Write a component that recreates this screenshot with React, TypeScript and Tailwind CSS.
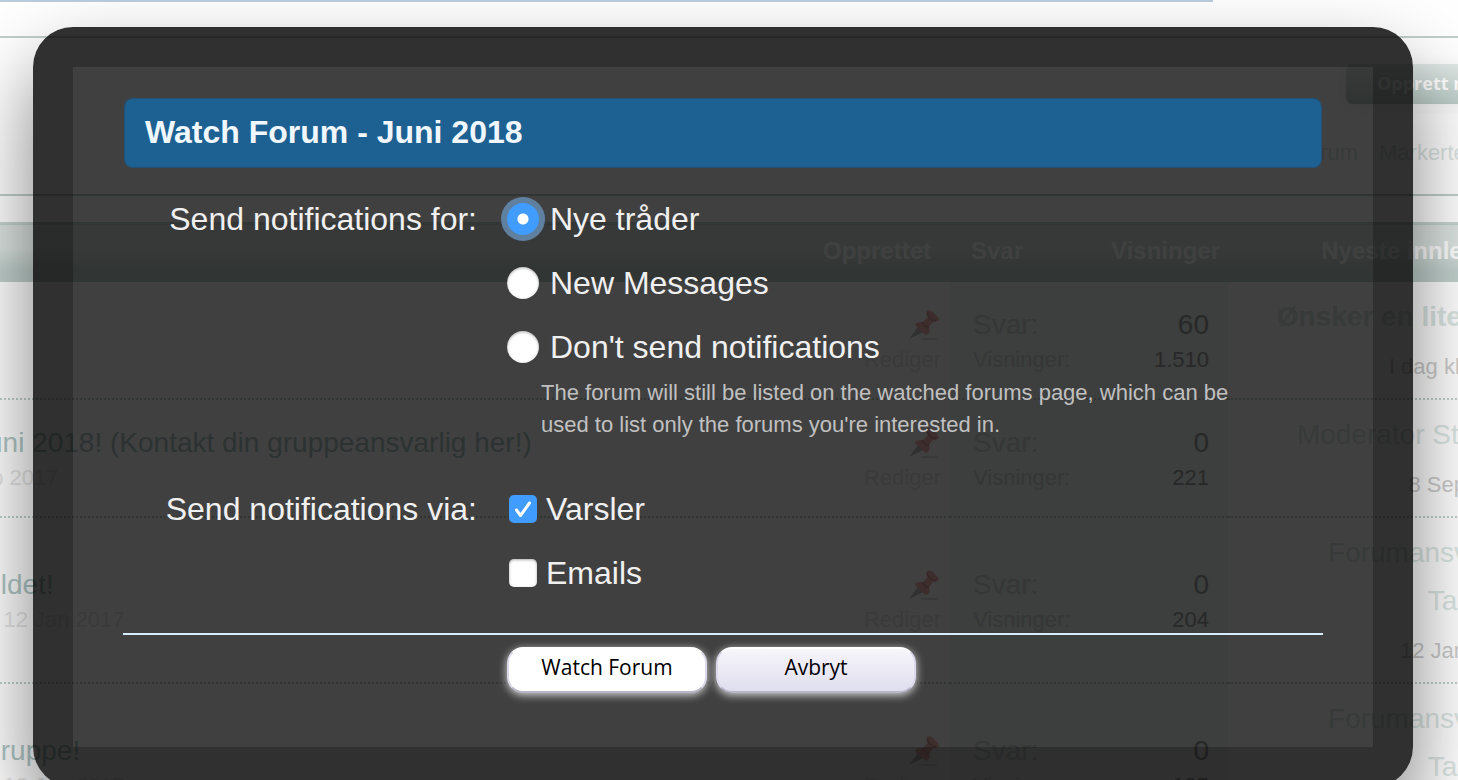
import clsx from 'clsx';
import { ReactNode, useState } from 'react';

type Thread = {
  title: string;
  titleClass: string;
  date: string;
  replies: string;
  views: string;
  last: string[];
  lastBold?: boolean;
  lastDate: string;
};

const threads: Thread[] = [
  {
    title: 'ni',
    titleClass: 'pl-0',
    date: '',
    replies: '60',
    views: '1.510',
    last: ['Ønsker en liten du'],
    lastBold: true,
    lastDate: 'I dag kl 12:34',
  },
  {
    title: 'uni 2018! (Kontakt din gruppeansvarlig her!)',
    titleClass: 'pl-2',
    date: 'ep 2017',
    replies: '0',
    views: '221',
    last: ['Moderator Steinar'],
    lastDate: '8 Sep 2017',
  },
  {
    title: 'bildet!',
    titleClass: 'pl-0',
    date: 'a, 12 Jan 2017',
    replies: '0',
    views: '204',
    last: ['Forumansvarlig', 'Tamara'],
    lastDate: '12 Jan 2017',
  },
  {
    title: 'Gruppe!',
    titleClass: 'pl-0',
    date: 'a, 12 Jan 2017',
    replies: '0',
    views: '195',
    last: ['Forumansvarlig', 'Tamara'],
    lastDate: '12 Jan 2017',
  },
];

function PinIcon() {
  return (
    <svg viewBox="0 0 30 30" className="w-[30px] h-[30px] mr-[2px]" aria-hidden="true">
      <path d="M12 29h16" stroke="#e4e4e4" strokeWidth="2" />
      <path d="M0 29 9 17l5 5z" fill="#c0c0c0" />
      <path
        d="M18 1c2-2 5 0 8 3s5 5 3 7c-2 1-4 0-5 1l-4 5c1 3 1 5-1 7-2 2-4 0-8-4s-6-5-4-7c2-1 4-1 7-1l5-5c1-2-2-5-1-6z"
        fill="#f5b4b4"
      />
      <path d="M18 3c1 4 4 7 9 8M14 12c0 3 3 5 6 5" fill="none" stroke="#d89a9a" strokeWidth="2" />
    </svg>
  );
}

function ThreadRow({ thread }: { thread: Thread }) {
  return (
    <tr className="border-b-2 border-dotted border-[#c0d0cb]">
      <td className="pt-1 pr-[9px] align-middle">
        <div className="flex justify-between items-center h-[34px] text-[28px]">
          <a href="#thread" className={clsx('text-[#b0c8c5] whitespace-nowrap', thread.titleClass)}>
            {thread.title}
          </a>
          <PinIcon />
        </div>
        <div className="flex justify-between items-center h-[34px] text-[22px] text-[#e6e6e6]">
          <span className="whitespace-nowrap">{thread.date}</span>
          <a href="#edit">Rediger</a>
        </div>
      </td>
      <td className="pt-1 pl-[23px] pr-[19px] bg-[#f1f7f5] align-middle text-[#d6d8d8]">
        <div className="flex justify-between items-center h-[34px] text-[28px]">
          <span>Svar:</span>
          <span className="text-[#a0a0a0]">{thread.replies}</span>
        </div>
        <div className="flex justify-between items-center h-[34px] text-[22px]">
          <span>Visninger:</span>
          <span className="text-[#a0a0a0]">{thread.views}</span>
        </div>
      </td>
      <td className="pt-[11px] pb-[5px] pr-[19px] text-right align-middle whitespace-nowrap">
        {thread.last.map((line) => (
          <div
            key={line}
            className={clsx('text-[28px] leading-[48px] text-[#dbe6e3]', thread.lastBold && 'font-bold')}
          >
            {line}
          </div>
        ))}
        <div className="text-[22px] leading-[52px] text-[#cccccc]">{thread.lastDate}</div>
      </td>
    </tr>
  );
}

function ForumPage() {
  return (
    <div className="-ml-[21px] -mr-[82px]">
      <div className="h-[2px] mr-[327px] bg-[#bbcddd]" />
      <div className="h-[2px] mt-[34px] bg-[#c0d0cb]" />
      <div className="flex justify-end mt-[26px]">
        <button className="w-[194px] h-10 pl-[31px] pb-[2px] rounded-[6px] text-left text-[18px] font-bold text-white whitespace-nowrap font-['Open_Sans',sans-serif] bg-linear-to-b from-[#e0e8e6] to-[#bccdc8] shadow-[0_0_0_6px_#ffffff66,0_2px_14px_#00000018]">
          Opprett ny tråd
        </button>
      </div>
      <nav className="flex justify-end mt-8 h-8 text-[22px] leading-[34px] text-[#dbe5e3]">
        <a href="#forum" className="mr-[21px]">
          Forum
        </a>
        <a href="#read" className="w-[161px] whitespace-nowrap">
          Markerte tråder
        </a>
      </nav>
      <div className="h-[2px] mt-[26px] mb-[26px] bg-[#c0d0cb]" />
      <table className="w-full table-fixed border-collapse">
        <colgroup>
          <col />
          <col className="w-[278px]" />
          <col className="w-[312px]" />
        </colgroup>
        <thead>
          <tr className="h-[59px] text-[24px] text-white border-t-2 border-[#c8d6d2] bg-linear-to-b from-[#dce4e1] from-40% to-[#c2d1cd] to-80%">
            <th className="pr-[19px] pb-1 text-right">Opprettet</th>
            <th className="pl-[21px] pr-2 pb-1">
              <div className="flex justify-between">
                <span>Svar</span>
                <span>Visninger</span>
              </div>
            </th>
            <th className="pr-12 pb-1 text-right">Nyeste innlegg</th>
          </tr>
        </thead>
        <tbody>
          {threads.map((thread) => (
            <ThreadRow key={thread.views} thread={thread} />
          ))}
        </tbody>
      </table>
    </div>
  );
}

function RadioOption({
  label,
  checked,
  onSelect,
}: {
  label: string;
  checked: boolean;
  onSelect: () => void;
}) {
  return (
    <label className="flex items-center gap-[11px] h-[60px]">
      <input
        type="radio"
        name="send"
        checked={checked}
        onChange={onSelect}
        className="appearance-none w-8 h-8 rounded-full bg-white shadow-[inset_0_1px_3px_#00000055] checked:bg-[radial-gradient(circle,#fff_5px,#409cff_6px)] checked:shadow-[0_0_0_6px_#60809f]"
      />
      {label}
    </label>
  );
}

function CheckOption({
  label,
  checked,
  onToggle,
}: {
  label: string;
  checked: boolean;
  onToggle: () => void;
}) {
  return (
    <label className="flex items-center gap-[9px] h-[60px] pl-[2px]">
      <span className="relative flex">
        <input
          type="checkbox"
          checked={checked}
          onChange={onToggle}
          className="appearance-none w-7 h-7 rounded-[5px] bg-white shadow-[inset_0_1px_3px_#00000055] checked:bg-[#409cff] checked:shadow-none"
        />
        {checked && (
          <svg viewBox="0 0 28 28" className="absolute inset-0 pointer-events-none" fill="none">
            <path
              d="m7.500 15 4 5.500L20.500 8"
              stroke="#fff"
              strokeWidth="3"
              strokeLinecap="round"
              strokeLinejoin="round"
            />
          </svg>
        )}
      </span>
      {label}
    </label>
  );
}

function FormRow({ label, children }: { label: string; children: ReactNode }) {
  return (
    <div className="flex" role="group" aria-label={label}>
      <div className="w-[32%] shrink-0 pr-[30px] text-right leading-[60px]">{label}</div>
      <div className="flex-1">{children}</div>
    </div>
  );
}

function WatchDialog() {
  const [send, setSend] = useState(0);
  const [alerts, setAlerts] = useState(true);
  const [emails, setEmails] = useState(false);

  const buttonClass =
    "w-[200px] h-[46px] pb-1 rounded-[16px] border-2 border-t-white border-x-[#dcdaea] border-b-[#b9b6c9] text-[21px] text-black font-['Open_Sans',sans-serif] shadow-[0_2px_8px_#ffffffcc]";

  return (
    <form
      role="dialog"
      aria-labelledby="watch-title"
      className="w-full px-[50px] pt-[31px] pb-[54px] bg-black/75 border-[40px] border-black/25 rounded-[40px] shadow-[0_40px_80px_#00000080] text-[32px] text-[#f0f0f0]"
      onSubmit={(e) => e.preventDefault()}
    >
      <h1
        id="watch-title"
        className="mx-px h-[70px] px-5 pb-[2px] flex items-center rounded-[8px] border border-[#245075] bg-[#1d6192] bg-clip-padding font-bold text-[#f0f7ff]"
      >
        Watch Forum - Juni 2018
      </h1>
      <div className="mt-[21px]">
        <FormRow label="Send notifications for:">
          <div className="flex flex-col gap-1">
            {['Nye tråder', 'New Messages', "Don't send notifications"].map((label, i) => (
              <RadioOption key={label} label={label} checked={send === i} onSelect={() => setSend(i)} />
            ))}
          </div>
          <p className="ml-[34px] mr-[60px] text-[22px] leading-[32px] text-[#c0c0c0]">
            The forum will still be listed on the watched forums page, which can be used to list only the forums
            you're interested in.
          </p>
        </FormRow>
      </div>
      <div className="mt-[38px]">
        <FormRow label="Send notifications via:">
          <div className="flex flex-col gap-1">
            <CheckOption label="Varsler" checked={alerts} onToggle={() => setAlerts(!alerts)} />
            <CheckOption label="Emails" checked={emails} onToggle={() => setEmails(!emails)} />
          </div>
        </FormRow>
      </div>
      <div className="flex gap-[9px] mt-[30px] pt-3 pl-[32%] border-t-2 border-[#d7edfc]">
        <button type="submit" className={clsx(buttonClass, 'bg-white')}>
          Watch Forum
        </button>
        <button type="button" className={clsx(buttonClass, 'bg-linear-to-b from-[#f7f6fc] to-[#dfdeed]')}>
          Avbryt
        </button>
      </div>
    </form>
  );
}

export default function App() {
  return (
    <main className="relative h-screen overflow-hidden bg-white font-['Liberation_Sans',Arial,sans-serif]">
      <ForumPage />
      <div className="absolute inset-0 pt-[27px] pl-[33px] pr-[45px]">
        <WatchDialog />
      </div>
    </main>
  );
}
